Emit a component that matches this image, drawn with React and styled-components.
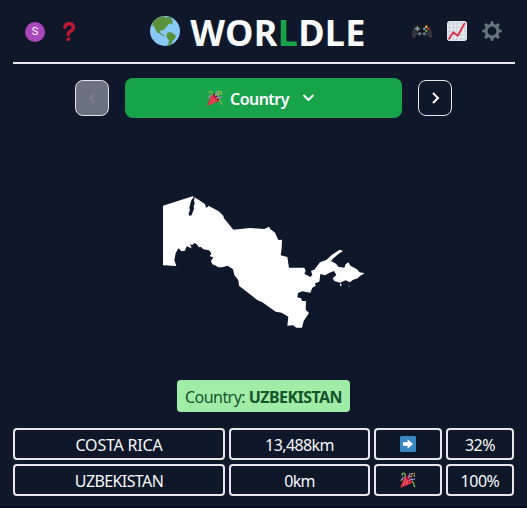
import React from "react";
import styled, { createGlobalStyle } from "styled-components";

const GlobalStyle = createGlobalStyle`
  *, *::before, *::after { box-sizing: border-box; }
  html, body { margin: 0; background: #0f172a; overflow: hidden; }
  svg { display: block; flex: none; }
  button { font: inherit; color: inherit; padding: 0; margin: 0; cursor: pointer; }
`;

const Page = styled.div`
  width: 527px;
  height: 508px;
  padding: 0 12px 0 13px;
  display: flex;
  flex-direction: column;
  background: #0f172a;
  border-bottom: 2px solid #0b0a1a;
  color: #f8fafc;
  font-family: "Noto Sans", "Open Sans", sans-serif;
  font-size: 16px;
`;

const Header = styled.header`
  height: 64px;
  border-bottom: 2px solid #e5e7eb;
  display: flex;
  align-items: center;
  justify-content: space-between;
  padding: 0 13px 0 12px;
`;

const Actions = styled.div`
  display: flex;
  align-items: center;
  gap: ${(p) => p.$gap}px;
  padding-top: ${(p) => p.$drop || 0}px;
`;

const IconButton = styled.button`
  display: flex;
  border: 0;
  background: none;
`;

const Avatar = styled.span`
  width: 20px;
  height: 20px;
  border-radius: 50%;
  display: flex;
  align-items: center;
  justify-content: center;
  background: #ab47bc;
  color: #fff;
  font: 400 11px/20px Roboto, sans-serif;
`;

const Title = styled.h1`
  margin: 0 0 0 28px;
  display: flex;
  align-items: center;
  gap: 10px;
  font-size: 36px;
  line-height: 40px;
  font-weight: 700;
`;

const Wordmark = styled.span`
  letter-spacing: 0.3px;
  white-space: nowrap;
  padding-top: 4px;
  line-height: 40px;
`;

const Accent = styled.span`
  color: #16a34a;
`;

const Rounds = styled.nav`
  margin-top: 14px;
  height: 40px;
  display: flex;
  align-items: center;
  padding-left: 62px;
  gap: 16px;
`;

const StepButton = styled.button`
  width: 34px;
  height: 36px;
  border: 1px solid #e5e7eb;
  border-radius: 8px;
  display: flex;
  align-items: center;
  justify-content: center;
  background: ${(p) => (p.disabled ? "#6b7280" : "transparent")};
  color: ${(p) => (p.disabled ? "#858585" : "#fff")};
`;

const RoundSelect = styled.button`
  width: 277px;
  height: 40px;
  border: 0;
  border-radius: 8px;
  display: flex;
  align-items: center;
  justify-content: center;
  padding-right: 5px;
  background: #16a34a;
  color: #fff;
  font-weight: 600;
`;

const RoundName = styled.span`
  margin: 2px 13px 0 7px;
  font-size: 16px;
  line-height: 24px;
  letter-spacing: -0.55px;
`;

const MapArea = styled.main`
  height: 262px;
  padding: 67px 0 0 142px;
`;

const Answer = styled.div`
  margin-left: 164px;
  width: 173px;
  height: 32px;
  border-radius: 4px;
  display: flex;
  align-items: center;
  justify-content: center;
  background: #a0eda8;
  color: #14532d;
  white-space: pre;
  padding-top: 2px;
  letter-spacing: -0.55px;
`;

const Guesses = styled.section`
  margin-top: 16px;
  width: 501px;
  display: grid;
  grid-template-columns: 212px 141px 68px 68px;
  grid-auto-rows: 32px;
  gap: 4px;
`;

const Cell = styled.div`
  border: 2px solid #e5e7eb;
  border-radius: 4px;
  display: flex;
  align-items: center;
  justify-content: center;
  padding-top: ${(p) => (p.$icon ? 0 : 2)}px;
  letter-spacing: ${(p) => p.$tracking || 0}px;
`;

const Party = () => (
  <svg width="16" height="16" viewBox="0 0 36 36">
    <path fill="#dd2e44" d="M11.6 7.6 1 33c-.6 1.500.5 2.600 2 2l25.500-11C27 18 19 9 11.600 7.600z" />
    <path fill="#ea596e" d="M13 12 6 32l3-1 4-16zM17 16l-5 14 4-2 3-10z" />
    <path fill="#a0041e" d="M12 8c5 0 18 12 16 16-3 2-17-10-16-16z" />
    <path fill="none" stroke="#aa8dd8" strokeWidth="3" d="M18 14c5-4 1-7 5-11M2 17c5 1 2-4 6-4M21 20c4-7 7-1 12-5" />
    <path fill="none" stroke="#77b255" strokeWidth="3" d="M6 8c-4-5 2-7 5-4 2 3-1 6 1 9M29 20c-4 3 4 4 2 8-1 3 3 2 2 6" />
    <g fill="#ffcc4d">
      <circle cx="27" cy="4" r="2" />
      <circle cx="32" cy="8" r="2" />
      <circle cx="25" cy="10" r="2" />
      <circle cx="32" cy="3" r="1.500" />
    </g>
    <circle cx="3" cy="19" r="2" fill="#5c913b" />
  </svg>
);

const Globe = () => (
  <svg width="30" height="30" viewBox="0 0 90 90">
    <circle cx="45" cy="45" r="45" fill="#88c9f9" />
    <path
      fill="#5c913b"
      d="M10 17C18 8 29 2 41 1l6 4 9-3 9 3-1 6 5 3-3 6 4 6-7-1-4-3-5 5-6 6-1 4-7 4 1 5-4-3-6 1-2 5 4 3 4-1 0 5 5 1 4 5-7-2-9-7-8-3-5-7-3-8-3-5-5-1z
      M50 54l5-5 9 0 6 4 7 5 0 6-5 7-4 3-2 6-6 8-6 2 1-9 2-8-5-6-3-7z"
    />
  </svg>
);

const Question = () => (
  <svg width="14" height="20" viewBox="0 0 14 20">
    <path fill="none" stroke="#be1931" strokeWidth="3.500" strokeLinecap="round" strokeLinejoin="round" d="M2.800 5.200C3.500.8 11.200.6 11.400 5.400c.1 3.900-5.200 3.400-5.200 7" />
    <circle cx="6.300" cy="17.200" r="1.900" fill="#be1931" />
  </svg>
);

const Gamepad = () => (
  <svg width="20" height="20" viewBox="0 0 20 20">
    <path fill="#31373d" d="M3 4.700C5 2.500 8 3.700 8 4.700h4c0-1 3-2.200 5 0 2 2 3.200 8 3 11-.4 1.800-2.400 1.600-3.300.4L14 12.500H6l-2.700 3.600C2.400 17.300.4 17.500 0 15.700c-.2-3 1-9 3-11z" />
    <path fill="#141618" d="M3 4.700C5 2.500 8 3.700 8 4.700h4c0-1 3-2.200 5 0 1 2 .8 5-1.500 6.400L13 14l-2-2H9l-2 2-2.500-2.900C2 8.500 2 6.500 3 4.700z" />
    <path stroke="#8899a6" strokeWidth="1.700" d="M5.400 5.200v5M2.900 7.700h5" />
    <g fill="#66757f">
      <circle cx="7.600" cy="12.700" r="1.800" />
      <circle cx="12.400" cy="12.700" r="1.800" />
    </g>
    <circle cx="14.300" cy="5.700" r="1.200" fill="#ffcc4d" />
    <circle cx="12.200" cy="7.700" r="1.200" fill="#55acee" />
    <circle cx="16.400" cy="7.700" r="1.200" fill="#dd2e44" />
    <circle cx="14.300" cy="9.800" r="1.200" fill="#77b255" />
  </svg>
);

const Chart = () => (
  <svg width="20" height="20" viewBox="0 0 20 20">
    <rect x=".5" y=".5" width="19" height="19" rx="1.800" fill="#ccd6dd" stroke="#e1e8ed" />
    <path d="M4.500 1v18M8.300 1v18M12.100 1v18M16 1v18M1 4.500h18M1 8.300h18M1 12.100h18M1 16h18" stroke="#f5f8fa" strokeWidth=".7" />
    <path d="m2.200 17.700 4-6.400 4.600 3.400 6.600-12.100" fill="none" stroke="#dd2e44" strokeWidth="1.900" strokeLinecap="round" strokeLinejoin="round" />
  </svg>
);

const Gear = () => (
  <svg width="20" height="20" viewBox="0 0 20 20">
    <path
      stroke="#66757f"
      strokeWidth="3.200"
      strokeLinecap="round"
      d="M10 1.600v2M10 16.400v2M1.600 10h2M16.400 10h2M4 4l1.500 1.500M14.500 14.500 16 16M4 16l1.500-1.500M14.500 5.500 16 4"
    />
    <circle cx="10" cy="10" r="5.900" fill="none" stroke="#66757f" strokeWidth="2.900" />
  </svg>
);

const ArrowRight = () => (
  <svg width="16" height="16" viewBox="0 0 16 16">
    <rect width="16" height="16" rx="1.500" fill="#3b88c3" />
    <path fill="#fff" d="M3 6.300h4.600V3.200L13 8l-5.400 4.800V9.700H3z" />
  </svg>
);

const Chevron = ({ d, w, h, stroke = 2 }) => (
  <svg width={w} height={h} viewBox={`0 0 ${w} ${h}`}>
    <path d={d} fill="none" stroke="currentColor" strokeWidth={stroke} />
  </svg>
);

const CountryShape = () => (
  <svg width="220" height="150" viewBox="0 0 660 450">
    <path
      fill="#fff"
      d="M24 62 115 33 115 38 109 46 106 56 103 68 105 76 101 84 102 92 110 91 112 84 117 72 116 64 119 56 117 45 119 37
      150 57 153 68 158 66 160 62 190 78 205 92 207 100 235 134 285 129 328 132 342 125 346 132 360 143
      370 165 381 164 380 190 377 211 397 216 402 248 448 248 452 258 448 266 466 276 472 270 468 258
      478 254 495 232 514 225 530 210 554 194 564 198 550 207 532 223 528 228 543 236 550 245 568 248
      572 238 580 232 586 242 606 253 614 262 629 265 616 272 608 280 595 284 584 292 572 286 555 293
      538 288 533 280 544 270 537 258 522 264 510 271 496 267 493 290 480 295 482 302 472 308 466 323
      442 319 429 324 427 337 438 340 441 348 453 348 452 374 462 384 446 408 441 428 424 428 414 421
      397 422 400 395 380 383 362 380 322 352 308 346 252 302 250 286 238 270 234 253 218 242 202 247
      190 247 183 242 172 238 168 228 175 217 164 214 169 205 162 196 145 193 138 186 132 187 125 178
      118 174 112 180 105 178 110 190 95 184 90 197 80 199 70 190 62 205 58 225 64 243 24 241Z
      M555 295 560 298 558 305 555 301ZM580 302h4v2h-4Z"
    />
  </svg>
);

const guesses = [
  { name: "COSTA RICA", nameTracking: -0.2, distance: "13,488km", distanceTracking: -0.6, icon: <ArrowRight />, score: "32%" },
  { name: "UZBEKISTAN", nameTracking: -0.6, distance: "0km", distanceTracking: -0.7, icon: <Party />, score: "100%" },
];

export default function App() {
  return (
    <>
      <GlobalStyle />
      <Page>
        <Header>
          <Actions $gap={17} $drop={2}>
            <Avatar>S</Avatar>
            <IconButton aria-label="Help"><Question /></IconButton>
          </Actions>
          <Title><Globe /><Wordmark>WOR<Accent>L</Accent>DLE</Wordmark></Title>
          <Actions $gap={15}>
            <IconButton aria-label="Games"><Gamepad /></IconButton>
            <IconButton aria-label="Statistics"><Chart /></IconButton>
            <IconButton aria-label="Settings"><Gear /></IconButton>
          </Actions>
        </Header>
        <Rounds>
          <StepButton disabled aria-label="Previous"><Chevron w={12} h={12} d="M8.500 1.500 4 6l4.500 4.500" stroke={1.5} /></StepButton>
          <RoundSelect>
            <Party />
            <RoundName>Country</RoundName>
            <Chevron w={13} h={10} d="m1.500 2 5 5 5-5" />
          </RoundSelect>
          <StepButton aria-label="Next"><Chevron w={12} h={12} d="m4 1 5 5-5 5" /></StepButton>
        </Rounds>
        <MapArea><CountryShape /></MapArea>
        <Answer>Country: <strong>UZBEKISTAN</strong></Answer>
        <Guesses>
          {guesses.map((g) => (
            <React.Fragment key={g.name}>
              <Cell $tracking={g.nameTracking}>{g.name}</Cell>
              <Cell $tracking={g.distanceTracking}>{g.distance}</Cell>
              <Cell $icon>{g.icon}</Cell>
              <Cell $tracking={-0.5}>{g.score}</Cell>
            </React.Fragment>
          ))}
        </Guesses>
      </Page>
    </>
  );
}
